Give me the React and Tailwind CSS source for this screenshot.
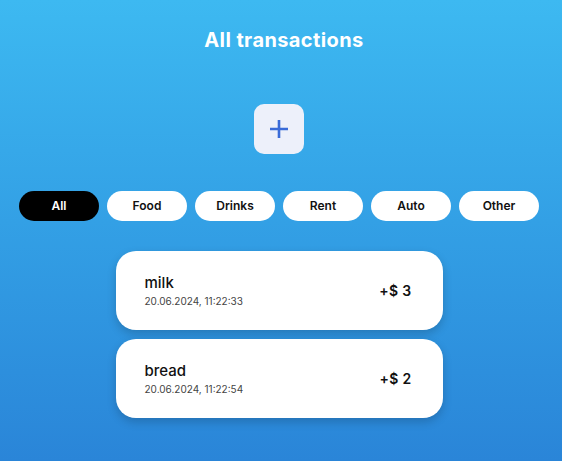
export default function App() {
  const filters = ['All', 'Food', 'Drinks', 'Rent', 'Auto', 'Other']
  const items = [
    { name: 'milk', date: '20.06.2024, 11:22:33', amount: '+$ 3' },
    { name: 'bread', date: '20.06.2024, 11:22:54', amount: '+$ 2' },
  ]

  return (
    <div
      className="min-h-[461px] w-full bg-gradient-to-b from-[#3db9f1] to-[#2a85d8]"
      style={{ fontFamily: 'Inter, "Open Sans", sans-serif' }}
    >
      <div className="w-[558px] flex flex-col items-center">
        {/* Title */}
        <h1 className="pt-[26px] pl-[10px] text-[20px] leading-[28px] font-bold text-white tracking-[0.4px]">
          All transactions
        </h1>

        {/* Add button */}
        <button className="mt-[50px] w-[50px] h-[50px] rounded-[10px] bg-[#edf0fa] flex items-center justify-center">
          <svg width="22" height="22" viewBox="0 0 22 22">
            <path d="M11 2v18M2 11h18" stroke="#3a6bd8" strokeWidth="2.6" />
          </svg>
        </button>

        {/* Filters */}
        <div className="mt-[37px] flex gap-2">
          {filters.map((f, i) => (
            <button
              key={f}
              className={`w-20 h-[30px] rounded-full text-[12px] font-semibold ${
                i === 0 ? 'bg-black text-white' : 'bg-white text-[#111]'
              }`}
            >
              {f}
            </button>
          ))}
        </div>

        {/* Transactions */}
        <div className="mt-[30px] flex flex-col gap-[9px]">
          {items.map((t) => (
            <div
              key={t.name}
              className="w-[327px] h-[79px] bg-white rounded-[20px] shadow-[0_4px_10px_rgba(0,0,0,0.18)] flex items-center justify-between pl-[29px] pr-[31px]"
            >
              <div className="flex flex-col">
                <span className="text-[15px] leading-[20px] font-medium text-[#111]">{t.name}</span>
                <span className="text-[10px] leading-[14px] text-[#444] mt-[1px]">{t.date}</span>
              </div>
              <span className="text-[14px] font-semibold text-[#111] tracking-[0.3px]">{t.amount}</span>
            </div>
          ))}
        </div>
      </div>
    </div>
  )
}
